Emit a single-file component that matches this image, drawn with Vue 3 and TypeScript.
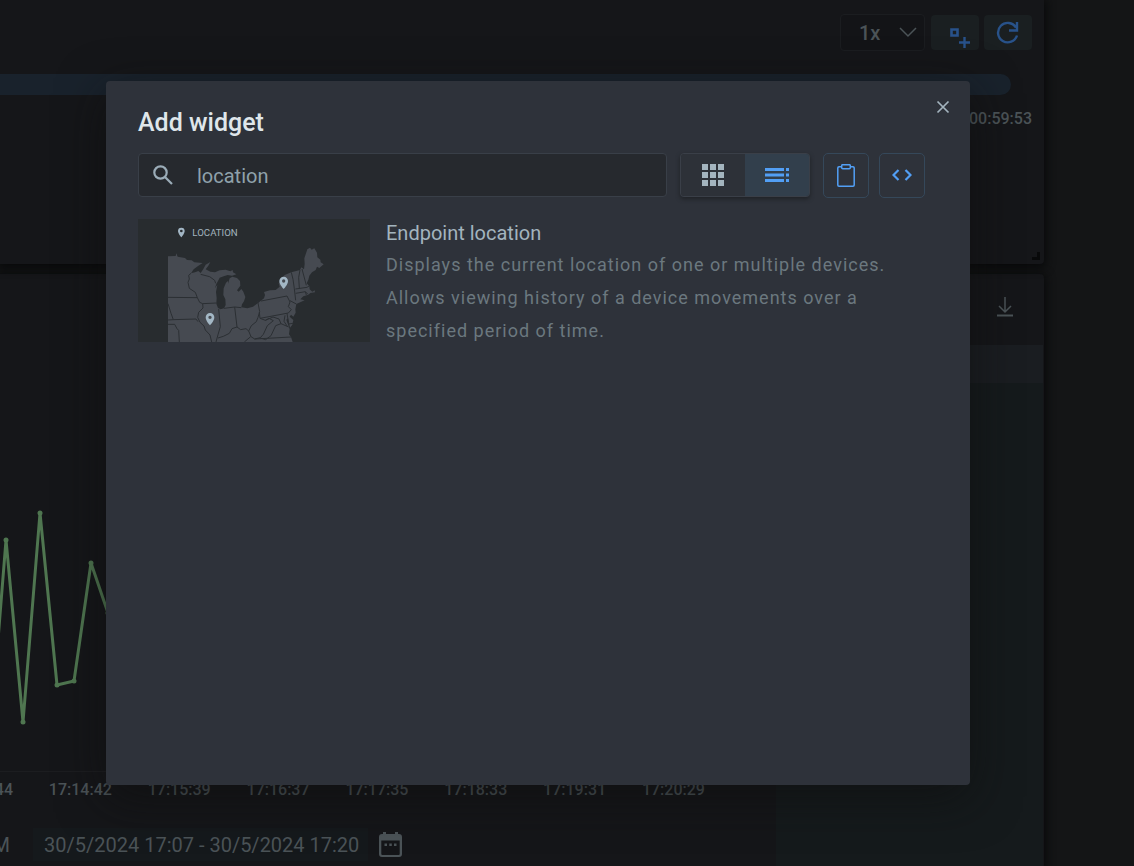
<script setup lang="ts">
import { computed, ref } from 'vue'

interface Widget {
  title: string
  description: string
}

const speed = ref('1x')
const period = ref('30/5/2024 17:07 - 30/5/2024 17:20')
const query = ref('location')
const view = ref<'grid' | 'list'>('list')

const ticks = ['17:13:44', '17:14:42', '17:15:39', '17:16:37', '17:17:35', '17:18:33', '17:19:31', '17:20:29']

const points: [number, number][] = [
  [-12, 420],
  [6, 195],
  [23, 377],
  [40, 168],
  [57, 340],
  [74, 336],
  [91, 218],
  [108, 268],
  [125, 240],
]
const line = computed(() => points.map((p) => p.join(',')).join(' '))

const widgets: Widget[] = [
  {
    title: 'Endpoint location',
    description:
      'Displays the current location of one or multiple devices. Allows viewing history of a device movements over a specified period of time.',
  },
]
const cells = [0, 8, 16]
</script>

<template>
  <div class="app">
    <main class="board">
      <section class="panel player">
        <div class="player-tools">
          <label class="speed">
            <select v-model="speed" aria-label="Playback speed">
              <option>1x</option>
              <option>2x</option>
            </select>
            <svg class="chevron" viewBox="0 0 18 11" width="18" height="11" aria-hidden="true">
              <path d="M1 1l8 8 8-8" />
            </svg>
          </label>
          <button class="tool" type="button" aria-label="Add marker">
            <svg viewBox="0 0 48 35" width="48" height="35" aria-hidden="true">
              <path d="M20.500 14.500h6v6h-6z" stroke-width="2.600" />
              <path d="M33.500 22v11M28 27.500h11" stroke-width="2.400" />
            </svg>
          </button>
          <button class="tool" type="button" aria-label="Refresh">
            <svg viewBox="0 0 48 35" width="48" height="35" aria-hidden="true">
              <path d="M32 12.500A9.700 9.700 0 1 0 33 20.500M33 7v8.500h-8" stroke-width="2.400" />
            </svg>
          </button>
        </div>
        <div class="track"></div>
        <span class="duration">00:59:53</span>
        <svg class="resize" viewBox="0 0 8 8" width="8" height="8" aria-hidden="true">
          <path d="M6.500 0v6.500H0" />
        </svg>
      </section>

      <section class="panel history">
        <header class="history-head">
          <button class="plain" type="button" aria-label="Download">
            <svg viewBox="0 0 16 20" width="16" height="20" aria-hidden="true">
              <path d="M8 0v14M2 9l6 6 6-6" stroke-width="1.500" />
              <path d="M0 18.500h16" stroke-width="2" />
            </svg>
          </button>
        </header>
        <div class="history-body">
          <div class="chart">
            <svg class="plot" aria-hidden="true">
              <polyline :points="line" />
              <circle v-for="p in points" :key="p[0]" :cx="p[0]" :cy="p[1]" r="2.500" />
            </svg>
            <div class="axis">
              <span v-for="tick in ticks" :key="tick">{{ tick }}</span>
            </div>
            <div class="period">
              <span class="meridiem">PM</span>
              <input v-model="period" type="text" aria-label="Period" />
              <button class="plain" type="button" aria-label="Open calendar">
                <svg class="calendar" viewBox="0 0 23 25" width="23" height="25" aria-hidden="true">
                  <path class="solid" d="M3 2h1V0h3v2h9V0h3v2h1a3 3 0 0 1 3 3v17a3 3 0 0 1-3 3H3a3 3 0 0 1-3-3V5a3 3 0 0 1 3-3zM2.300 8.500V22a1 1 0 0 0 1 1h16.400a1 1 0 0 0 1-1V8.500z" />
                  <path class="solid" d="M5.500 11.500H8V14H5.500zM10.300 11.500h2.500V14h-2.500zM15 11.500h2.500V14H15z" />
                </svg>
              </button>
            </div>
          </div>
          <aside class="side"><div class="side-head"></div></aside>
        </div>
      </section>
    </main>

    <div class="overlay">
      <div class="dialog" role="dialog" aria-modal="true" aria-labelledby="dialog-title">
        <button class="close" type="button" aria-label="Close">
          <svg viewBox="0 0 14 14" width="14" height="14" aria-hidden="true">
            <path d="M1.500 1.500l11 11M12.500 1.500l-11 11" />
          </svg>
        </button>
        <h2 id="dialog-title">Add widget</h2>
        <div class="toolbar">
          <label class="search">
            <svg viewBox="0 0 20 20" width="20" height="20" aria-hidden="true">
              <circle cx="7.500" cy="7.500" r="6.200" />
              <path d="M12 12l7 7" />
            </svg>
            <input v-model="query" type="text" aria-label="Search widgets" />
          </label>
          <div class="switch">
            <button type="button" :class="{ active: view === 'grid' }" aria-label="Grid view" @click="view = 'grid'">
              <svg viewBox="0 0 22 22" width="22" height="22" aria-hidden="true">
                <template v-for="y in cells" :key="y">
                  <rect v-for="x in cells" :key="x" :x="x" :y="y" width="6" height="6" />
                </template>
              </svg>
            </button>
            <button type="button" :class="{ active: view === 'list' }" aria-label="List view" @click="view = 'list'">
              <svg viewBox="0 0 24 14" width="24" height="14" aria-hidden="true">
                <path d="M0 0h19v3H0zM21 0h3v3h-3zM0 5.500h19v3H0zM21 5.500h3v3h-3zM0 11h19v3H0zM21 11h3v3h-3z" />
              </svg>
            </button>
          </div>
          <button class="action" type="button" aria-label="Paste from clipboard">
            <svg viewBox="0 0 18 24" width="18" height="24" aria-hidden="true">
              <path d="M4 2.700H2a1.200 1.200 0 0 0-1.200 1.200V21A1.200 1.200 0 0 0 2 22.200h14a1.200 1.200 0 0 0 1.200-1.200V3.900A1.200 1.200 0 0 0 16 2.700h-2" />
              <rect x="4.700" y=".7" width="8.600" height="4" rx="1" />
            </svg>
          </button>
          <button class="action code" type="button" aria-label="Edit code">
            <svg viewBox="0 0 20 14" width="20" height="14" aria-hidden="true">
              <path d="M6.500 1L1.500 6l5 5M13.500 1l5 5-5 5" />
            </svg>
          </button>
        </div>

        <ul class="widgets">
          <li v-for="widget in widgets" :key="widget.title">
            <svg class="thumb" viewBox="9 21 696 369" width="232" height="123" role="img" aria-label="Location map">
              <path
                class="land"
                d="M99 133L122 132 124 124 128 134 150 138 156 144 170 145 178 151 203 153 188 163 176 172 168 184 180 181 190 177 197 183 205 171 212 158 226 150 220 161 212 172 226 179 240 181 254 175 272 173 286 178 293 174 294 181 304 187 291 191 278 189 266 193 254 197 249 207 244 216 240 229 247 218 243 240 245 258 244 275 249 288 257 292 267 289 272 279 271 262 265 249 266 229 273 212 279 207 279 215 284 199 292 194 306 198 315 207 316 221 306 235 311 239 319 231 325 239 331 255 327 268 321 277 319 286 337 289 354 284 372 271 387 259 390 249 387 240 405 235 422 234 434 224 431 214 440 200 449 189 469 181 495 174 499 166 507 172 509 156 508 139 517 112 525 107 530 113 538 109 546 122 547 136 556 143 557 151 566 157 553 168 546 164 542 174 531 181 523 191 520 203 515 214 523 223 524 232 532 239 539 235 540 241 526 243 520 248 505 253 496 262 509 265 484 276 481 292 482 302 475 314 468 308 464 314 475 324 472 338 465 347 459 319 454 323 459 337 464 352 462 367 468 375 473 390H99z"
              />
              <g class="borders">
                <path d="M99 256L187 257M99 275L108 304 115 323 99 324M115 323L183 321 189 329M99 337L119 337 126 350 131 355 133 390M168 184L161 190 163 201 159 211 163 229 181 241 187 257 194 271 203 275 204 288 191 301 188 316 195 331 207 342 211 354 225 369 230 390M203 275L244 273M197 187L224 194 239 205 242 214M251 291L256 344 249 368 243 390M267 289L299 285 319 287M299 285L306 345 291 350 283 364 265 373 249 378M306 345L317 353 333 350 341 357 349 341 364 329 369 316 374 299 368 267M341 357L348 374 359 381 376 377 385 367 397 341 415 326 402 319 391 325 375 319 373 301M375 319L460 303 469 293 460 284 465 270 456 252 378 267M347 374L328 390M359 381L468 375M391 325L414 315 432 321 438 335 461 345M456 304L461 336 474 334M465 266L484 276M469 181L474 202 478 230 482 265M495 174L491 196 493 229M501 171L514 220M481 231L516 226 524 221M482 244L511 239 519 247M511 239L514 249" />
                <path d="M376 378L392 383 408 371 422 341 438 335M450 310L447 328 457 343" />
              </g>
              <g class="pins">
                <path fill-rule="evenodd" d="M139 47a10 10 0 0 0-10 10c0 8 10 19 10 19s10-11 10-19a10 10 0 0 0-10-10zm0 6a4 4 0 1 1 0 8 4 4 0 0 1 0-8z" />
                <path fill-rule="evenodd" d="M446 194a13 13 0 0 0-13 13c0 11 13 24 13 24s13-13 13-24a13 13 0 0 0-13-13zm0 8a5 5 0 1 1 0 10 5 5 0 0 1 0-10z" />
                <path fill-rule="evenodd" d="M225 303a13 13 0 0 0-13 13c0 11 13 24 13 24s13-13 13-24a13 13 0 0 0-13-13zm0 8a5 5 0 1 1 0 10 5 5 0 0 1 0-10z" />
              </g>
              <text x="172" y="71">LOCATION</text>
            </svg>
            <div class="info">
              <h3>{{ widget.title }}</h3>
              <p>{{ widget.description }}</p>
            </div>
          </li>
        </ul>
      </div>
    </div>
  </div>
</template>

<style>
body {
  background: #141516;
}
</style>

<style scoped>
* {
  box-sizing: border-box;
}
.app {
  height: 100vh;
  overflow: hidden;
  position: relative;
  background: #141516;
  color: #4b5357;
  font-family: Roboto, 'Liberation Sans', sans-serif;
}
button,
input,
select {
  font: inherit;
  color: inherit;
  margin: 0;
  padding: 0;
}
svg {
  display: block;
  fill: none;
}
h2,
h3,
p,
ul {
  margin: 0;
  padding: 0;
}
.board {
  height: 100%;
  margin-right: 90px;
  display: grid;
  grid-template-rows: 264px 1fr;
  gap: 10px;
}
.panel {
  background: #151619;
  box-shadow: 0 2px 10px 2px #08090a;
  min-width: 0;
}
.player {
  position: relative;
  border-radius: 0 0 4px 0;
  display: flex;
  flex-direction: column;
}
.player-tools {
  display: flex;
  justify-content: flex-end;
  align-items: center;
  padding: 14px 12px 0 0;
}
.speed {
  position: relative;
  margin-right: 6px;
}
.speed select {
  display: block;
  appearance: none;
  width: 85px;
  height: 37px;
  padding-left: 18px;
  border: 1px solid #1b1d20;
  border-radius: 4px;
  background: #131417;
  font-size: 20px;
  font-weight: 500;
}
.chevron {
  position: absolute;
  right: 8px;
  top: 13px;
  stroke: #4b5357;
  stroke-width: 1.5;
}
.tool {
  width: 48px;
  height: 35px;
  border: 0;
  border-radius: 4px;
  background: #1a1f21;
}
.tool + .tool {
  margin-left: 5px;
}
.tool svg {
  stroke: #28528a;
}
.track {
  height: 21px;
  margin: 23px 33px 0 0;
  border-radius: 0 11px 11px 0;
  background: #19222c;
}
.duration {
  align-self: flex-end;
  margin: 14px 12px 0 0;
  font-size: 16px;
  font-weight: 500;
  line-height: 20px;
}
.resize {
  position: absolute;
  right: 4px;
  bottom: 4px;
  stroke: #08090a;
  stroke-width: 3;
}
.history {
  display: flex;
  flex-direction: column;
  border-radius: 0 4px 0 0;
}
.history-head {
  height: 71px;
  display: flex;
  justify-content: flex-end;
  align-items: center;
  padding: 0 31px 6px 0;
}
.plain {
  border: 0;
  background: none;
}
.plain svg {
  stroke: #4b5357;
}
.history-body {
  flex: 1;
  display: flex;
  min-height: 0;
}
.chart {
  flex: 1;
  min-width: 0;
  display: flex;
  flex-direction: column;
}
.plot {
  flex: 1;
  width: 100%;
  min-height: 0;
  border-bottom: 1px solid #1c1d20;
}
.plot polyline {
  stroke: #4f7650;
  stroke-width: 3;
  stroke-linejoin: round;
}
.plot circle {
  fill: #4f7650;
}
.axis {
  display: flex;
  justify-content: space-between;
  margin: 8px 71px 0 -50px;
  font-size: 16px;
  font-weight: 500;
  line-height: 20px;
}
.period {
  display: flex;
  align-items: center;
  margin: 28px 0 5px -20px;
  font-size: 20px;
}
.meridiem {
  width: 53px;
}
.period input {
  width: 335px;
  height: 33px;
  padding-left: 11px;
  border: 0;
  background: #15191c;
}
.period .plain {
  margin-left: 11px;
}
.calendar .solid {
  fill: #4b5357;
  stroke: none;
  fill-rule: evenodd;
}
.side {
  width: 267px;
  margin-right: 1px;
  background: #151a1c;
}
.side-head {
  height: 38px;
  background: #1a1d21;
}
.overlay {
  position: absolute;
  inset: 0;
  display: flex;
  padding: 81px 164px 81px 106px;
}
.dialog {
  position: relative;
  flex: 1;
  min-width: 0;
  padding: 26px 45px 32px 32px;
  border-radius: 4px;
  background: #2e323a;
  box-shadow: 0 12px 48px rgba(14, 14, 14, 0.6);
}
.close {
  position: absolute;
  top: 15px;
  right: 16px;
  width: 22px;
  height: 22px;
  display: grid;
  place-items: center;
  border: 0;
  background: none;
}
.close svg {
  stroke: #a3b4be;
  stroke-width: 1.7;
}
h2 {
  color: #dfe6ea;
  font-size: 25px;
  font-weight: 500;
  line-height: 32px;
}
.toolbar {
  display: flex;
  margin-top: 14px;
}
.search {
  flex: 1;
  min-width: 0;
  height: 44px;
  display: flex;
  align-items: center;
  gap: 24px;
  padding: 0 14px;
  border: 1px solid #393f48;
  border-radius: 4px;
  background: #26292e;
}
.search svg {
  stroke: #9bacb8;
  stroke-width: 2.2;
}
.search input {
  flex: 1;
  min-width: 0;
  height: 40px;
  padding-top: 2px;
  border: 0;
  outline: 0;
  background: none;
  color: #8fa1ab;
  font-size: 20px;
}
.switch {
  display: flex;
  width: 130px;
  height: 44px;
  margin-left: 13px;
  border-radius: 4px;
  border: 1px solid #3a3f48;
  overflow: hidden;
  box-shadow: 0 2px 4px #1f2226;
}
.switch button {
  flex: 1;
  display: grid;
  place-items: center;
  border: 0;
  background: #2d3138;
}
.switch button.active {
  background: #323f4c;
}
.switch svg {
  fill: #a3b4be;
}
.switch .active svg {
  fill: #529ff5;
}
.action {
  width: 46px;
  height: 45px;
  display: grid;
  place-items: center;
  margin-left: 13px;
  border: 1px solid #35485a;
  border-radius: 5px;
  background: none;
}
.action svg {
  stroke: #529ff5;
  stroke-width: 1.5;
}
.action.code {
  margin-left: 10px;
}
.action.code svg {
  stroke-width: 2.2;
}
.widgets {
  list-style: none;
  margin-top: 21px;
}
.widgets li {
  display: flex;
  gap: 16px;
}
.thumb {
  flex: none;
  background: #282c2f;
}
.land {
  fill: #464a51;
}
.borders {
  stroke: #2b2f33;
  stroke-width: 3;
  stroke-linejoin: round;
}
.pins {
  fill: #a3b7c5;
}
.thumb text {
  fill: #a3b4be;
  font-size: 29px;
}
h3 {
  color: #a3b4be;
  font-size: 20px;
  font-weight: 400;
  line-height: 29px;
}
.info p {
  color: #6b787f;
  font-size: 18px;
  line-height: 33px;
  letter-spacing: 1px;
}
</style>
